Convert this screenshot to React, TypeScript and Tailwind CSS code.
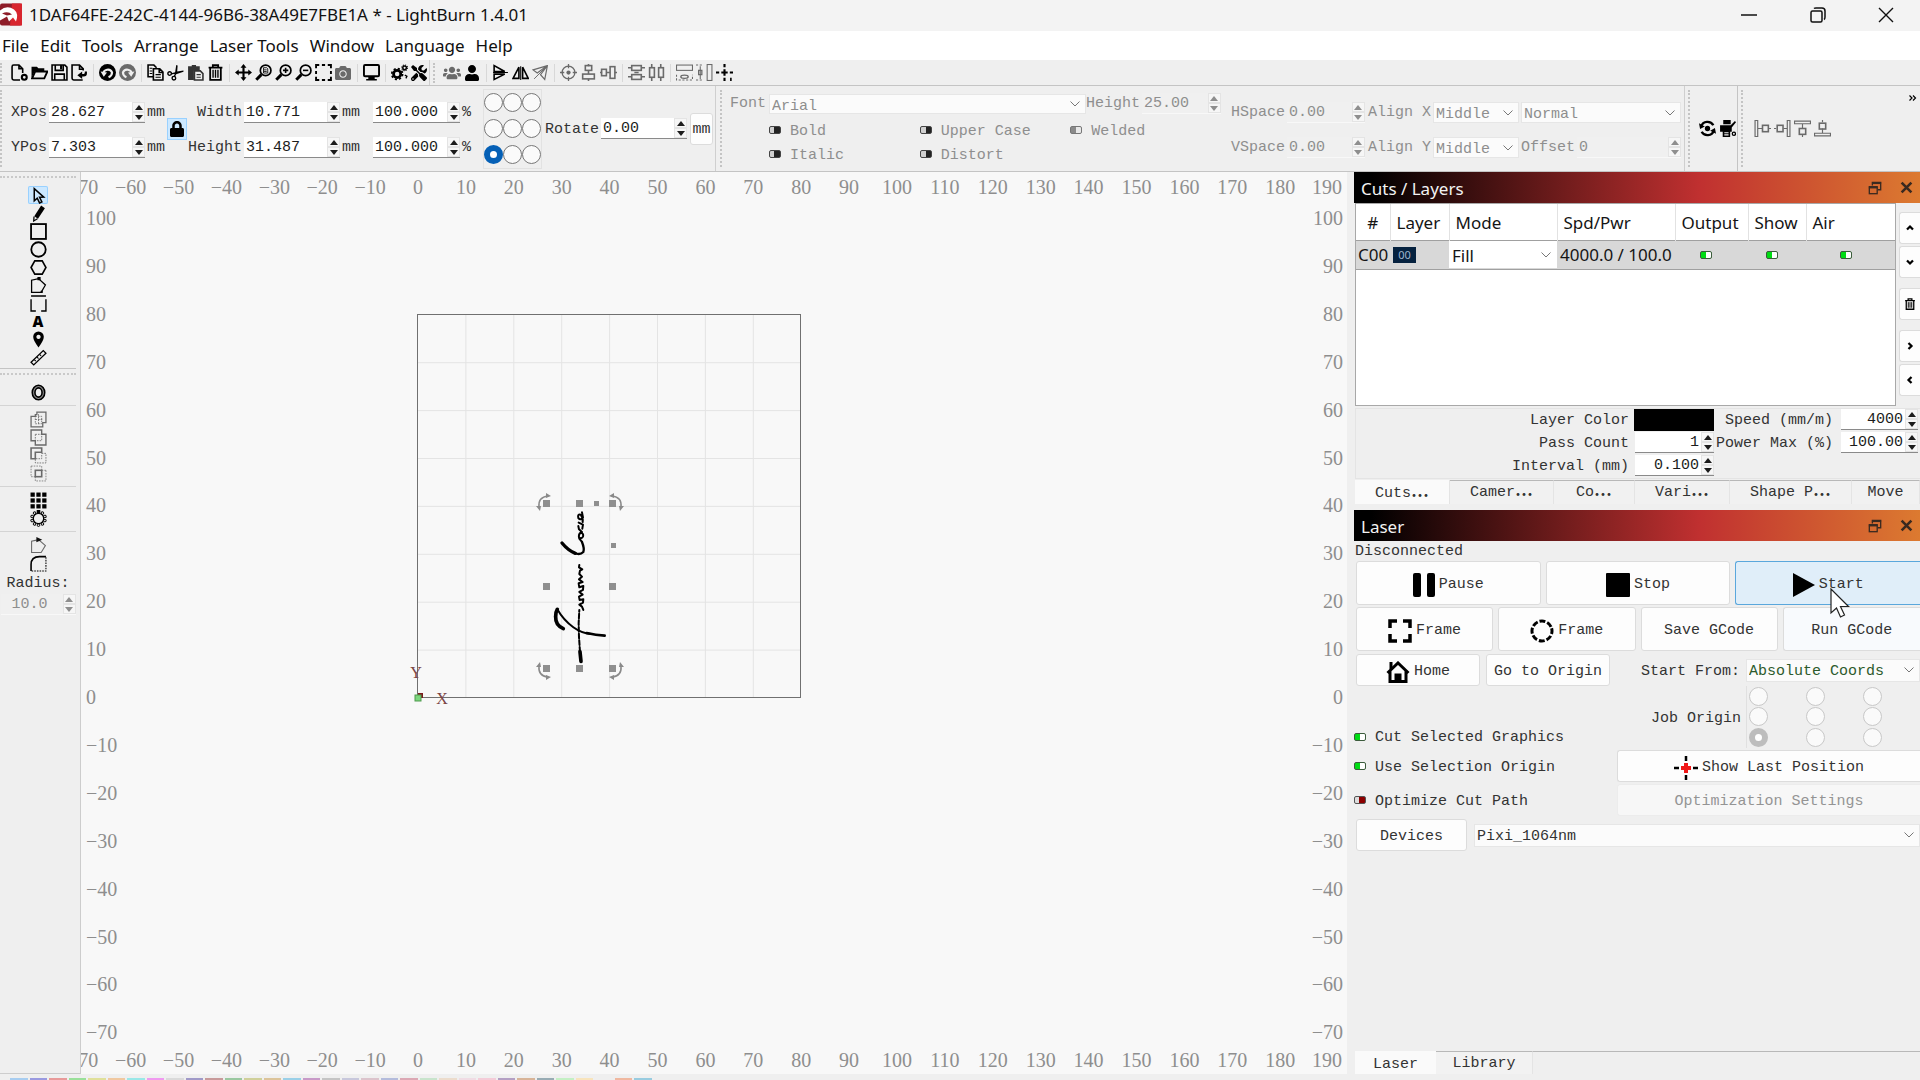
import type { ReactNode } from "react";
import clsx from "clsx";
import { FaCamera, FaLock, FaTools, FaUser, FaUsers } from "react-icons/fa";

const MONO = "font-['Liberation_Mono','Noto_Sans_CJK_SC',monospace]";
const SANS = "font-['Noto_Sans','Open_Sans',sans-serif]";

/* ---------- icons ---------- */

function Icon({ children, className = "size-[17px]" }: { children: ReactNode; className?: string }) {
  return (
    <svg
      viewBox="0 0 16 16"
      className={clsx("shrink-0", className)}
      fill="none"
      stroke="currentColor"
      strokeWidth="1.5"
      aria-hidden="true"
    >
      {children}
    </svg>
  );
}

const solid = { fill: "currentColor", stroke: "none" };

const NewIcon = () => (
  <Icon>
    <path d="M8.500 15H2.500Q1 15 1 13.500V2.500Q1 1 2.500 1H7.500L11 4.500V8.500M7.500 1V4.500H11" />
    <circle cx="12.500" cy="12.500" r="2.300" strokeWidth="2" />
  </Icon>
);
const OpenIcon = () => (
  <Icon>
    <path d="M1 13.500L4 7H15.500L12.500 13.500Z" strokeWidth="1.800" />
    <path d="M0.500 2.500h5L7 4h5.500v3H3.500L0.500 13z" {...solid} />
  </Icon>
);
const SaveIcon = () => (
  <Icon>
    <path d="M1 1H13L15 3V15H1Z" />
    <path d="M4 1V6H11.500V1M3.500 15V9.500H12.500V15" />
    <path d="M8.500 1h2v4h-2z" {...solid} />
  </Icon>
);
const ImportIcon = () => (
  <Icon>
    <path d="M11 15H2.500Q1 15 1 13.500V1H8L11.500 4.500V6M8 1V5H11.500" />
    <path d="M6 10.500L10.500 7V9.300H12Q13 9.300 13 8V7H15V9Q15 11.700 12 11.700H10.500V14Z" {...solid} />
  </Icon>
);
const UndoIcon = () => (
  <Icon>
    <circle cx="8" cy="8" r="8" {...solid} />
    <path d="M4 9.500A4.300 4.300 0 0 1 12.300 8Q12.300 11 9 12.500" stroke="#efefef" strokeWidth="2" />
    <path d="M1.500 7L7.500 8L4.500 12Z" fill="#efefef" stroke="none" />
  </Icon>
);
const RedoIcon = () => (
  <Icon>
    <circle cx="8" cy="8" r="8" {...solid} />
    <path d="M12 9.500A4.300 4.300 0 0 0 3.700 8Q3.700 11 7 12.500" stroke="#efefef" strokeWidth="2" />
    <path d="M14.500 7L8.500 8L11.500 12Z" fill="#efefef" stroke="none" />
  </Icon>
);
const CopyIcon = () => (
  <Icon>
    <path d="M6 12H1V1H6.500L9 3.500" />
    <path d="M6 4.500H12L15 7.500V15H6ZM11.500 4.500V8H15" />
    <path d="M2.500 4h2.500M2.500 6.500h2.500M2.500 9h2.500M8 10h5M8 12.500h5" strokeWidth="1" />
  </Icon>
);
const CutIcon = () => (
  <Icon>
    <circle cx="2.500" cy="9" r="1.700" strokeWidth="1.300" />
    <circle cx="6.500" cy="13.300" r="1.700" strokeWidth="1.300" />
    <path d="M4 9.300L8.500 8.300L7 11.500" strokeWidth="1.300" />
    <path d="M7.500 8.700L8.700 1L10 1.500L9.600 7L15.500 6.200V7.300L8.500 9.600Z" {...solid} />
  </Icon>
);
const PasteIcon = () => (
  <Icon className="size-[17px] text-[#333]">
    <path d="M1 2h3.500V1h4v1H12v4H6.500v9H1z" {...solid} />
    <path d="M7 6.500H12.500L15 9V15H7Z" />
    <path d="M9 10h4M9 12.500h4" strokeWidth="1" />
  </Icon>
);
const TrashIcon = ({ className = "size-[17px]" }: { className?: string }) => (
  <Icon className={className}>
    <path d="M1.500 3.500H14.500M5.500 3.500V1.200H10.500V3.500M3 3.500V15H13V3.500" strokeWidth="1.700" />
    <path d="M5.700 5.500V13M8 5.500V13M10.300 5.500V13" strokeWidth="1.300" />
  </Icon>
);
const MoveIcon = () => (
  <Icon>
    <path d="M8 2V14M2 8H14" strokeWidth="2" />
    <path d="M8 0l2.800 3.500H5.200zM8 16l2.800-3.500H5.200zM0 8l3.500-2.800v5.600zM16 8l-3.500-2.800v5.600z" {...solid} />
  </Icon>
);
function Magnifier({ mark }: { mark: ReactNode }) {
  return (
    <Icon>
      <circle cx="10" cy="6" r="5" strokeWidth="1.600" />
      <path d="M6 10L1.200 14.800" strokeWidth="2.800" />
      {mark}
    </Icon>
  );
}
const SelectFrameIcon = () => (
  <Icon>
    <path
      d="M1 4V1H4M6.500 1H9.500M12 1H15V4M15 6.500V9.500M15 12V15H12M9.500 15H6.500M4 15H1V12M1 9.500V6.500"
      strokeWidth="1.800"
    />
  </Icon>
);
const MonitorIcon = () => (
  <Icon>
    <rect x="0.900" y="1" width="14.200" height="10.500" rx="1" strokeWidth="1.800" />
    <path d="M5 12h6v2h2v1.500H3V14h2z" {...solid} />
  </Icon>
);
const GearsIcon = () => (
  <Icon>
    <circle cx="5.800" cy="9.500" r="3.400" strokeWidth="2.600" />
    <circle cx="5.800" cy="9.500" r="5.100" strokeWidth="1.600" strokeDasharray="2 2" />
    <circle cx="12.800" cy="3.600" r="1.700" strokeWidth="1.400" />
    <circle cx="12.800" cy="3.600" r="2.700" strokeWidth="1" strokeDasharray="1.060 1.060" />
    <path d="M13 10.500l2 1-1 2" strokeWidth="1.200" />
  </Icon>
);
const FlipVIcon = () => (
  <Icon>
    <path d="M2 1.500V7H12Z" />
    <path d="M1 8H15" strokeWidth="1" />
    <path d="M2 14.500V9.500H12Z" />
  </Icon>
);
const FlipHIcon = () => (
  <Icon>
    <path d="M1 13.500L6.500 3V13.500Z" />
    <path d="M8.200 2V15" strokeWidth="1" />
    <path d="M15.300 13.500L10 3V13.500Z" />
  </Icon>
);
const MirrorIcon = () => (
  <Icon>
    <path d="M1 5.500L14.500 1.500L5 8.500Z M14.500 1.500L8 10L12 14.500Z" strokeWidth="1.100" />
    <path d="M2 14L15 1" strokeWidth="0.900" />
  </Icon>
);
const TargetIcon = () => (
  <Icon>
    <circle cx="8" cy="8" r="6" strokeWidth="1.200" />
    <circle cx="8" cy="8" r="2" {...solid} />
    <path d="M8 0V4M8 12V16M0 8H4M12 8H16" strokeWidth="1.200" />
  </Icon>
);
const AlignCenterVIcon = () => (
  <Icon>
    <rect x="5" y="1.500" width="6" height="4.500" />
    <rect x="2.500" y="9.500" width="11" height="4.500" />
    <path d="M8 0V2M8 6V9.500M8 14V16" />
  </Icon>
);
const AlignCenterHIcon = () => (
  <Icon>
    <rect x="1.500" y="5" width="4.500" height="6" />
    <rect x="9.500" y="2.500" width="4.500" height="11" />
    <path d="M0 8H2M6 8H9.500M14 8H16" />
  </Icon>
);
const DistributeVIcon = () => (
  <Icon>
    <rect x="3.500" y="1.500" width="9" height="4.500" />
    <rect x="3.500" y="10" width="9" height="4.500" />
    <path d="M0 3.500H3M13 3.500H16M0 12H3M13 12H16M6 8H10" />
  </Icon>
);
const DistributeHIcon = () => (
  <Icon>
    <rect x="1.500" y="3.500" width="4.500" height="9" />
    <rect x="10" y="3.500" width="4.500" height="9" />
    <path d="M3.500 0V3M3.500 13V16M12 0V3M12 13V16" />
  </Icon>
);
const SpaceVIcon = () => (
  <Icon>
    <rect x="0.500" y="1" width="15" height="5" strokeWidth="1" />
    <path d="M0.500 10V15H15.500V10" strokeWidth="1" strokeDasharray="2 1.500" />
    <ellipse cx="8" cy="12" rx="3.500" ry="1.500" strokeWidth="1.200" />
  </Icon>
);
const SpaceHIcon = () => (
  <Icon>
    <rect x="10.500" y="0.500" width="4.500" height="15" strokeWidth="1" />
    <path d="M0 1H7M0 15H7" strokeWidth="1" strokeDasharray="2 1.500" />
    <path d="M4 2V14" strokeWidth="1" />
    <rect x="2.500" y="6" width="3" height="4" strokeWidth="1.200" />
  </Icon>
);
const CrossIcon = () => (
  <Icon>
    <path d="M8 0V3M8 5V11M8 13V16M0 8H3M5 8H11M13 8H16" strokeWidth="2" />
    <path d="M14 13v3" strokeWidth="1.500" />
  </Icon>
);

const ArrowToolIcon = () => (
  <Icon>
    <path d="M4 1.500V13L6.800 10.500L9 15L11.200 14L9 9.700L13 9.500Z" strokeWidth="1.400" />
  </Icon>
);
const PencilIcon = () => (
  <Icon>
    <path d="M10.500 0.500L14 3L7.500 13L4 10.500Z" {...solid} />
    <path d="M3.800 10.800L3.500 15L7 13" strokeWidth="1.200" />
  </Icon>
);
const CloseShapeIcon = () => (
  <Icon>
    <path d="M1.500 14.500V3L8 1.500L14.500 7.500L10.500 14.500Z" strokeWidth="1.200" />
    <path d="M7 0h3v3H7zM10 13h2v2h-2z" {...solid} />
  </Icon>
);
const RulerIcon = () => (
  <Icon>
    <path d="M1 12.500L12.500 1.500L15 4L3.500 15Z" strokeWidth="1.200" />
    <path d="M4 10l1.500 1.500M6.500 7.500L8 9M9 5l1.500 1.500" strokeWidth="1" />
  </Icon>
);

const DRAW_TOOLS: { name: string; icon: ReactNode }[] = [
  { name: "Select", icon: <ArrowToolIcon /> },
  { name: "Draw lines", icon: <PencilIcon /> },
  { name: "Rectangle", icon: <Icon><rect x="1" y="1" width="14" height="14" strokeWidth="1.700" /></Icon> },
  { name: "Ellipse", icon: <Icon><circle cx="8" cy="8" r="6.800" strokeWidth="1.700" /></Icon> },
  { name: "Polygon", icon: <Icon><path d="M1 8L4.500 1.800H11.500L15 8L11.500 14.200H4.500Z" /></Icon> },
  { name: "Edit nodes", icon: <CloseShapeIcon /> },
  { name: "Tabs", icon: <Icon><path d="M1 1H15M1 4V15H5.500M10.500 15H15V4" strokeWidth="1.300" /></Icon> },
  { name: "Text", icon: <span className="text-[15px] leading-none font-black font-['Noto_Sans',sans-serif]">A</span> },
  { name: "Position laser", icon: <Icon><path fillRule="evenodd" d="M8 0.500A5 5 0 0 1 13 5.500Q13 9 8 15.500Q3 9 3 5.500A5 5 0 0 1 8 0.500ZM8 3.500a2 2 0 1 0 0.010 0Z" {...solid} /></Icon> },
  { name: "Measure", icon: <RulerIcon /> },
];

const BOOLEAN_TOOLS: { name: string; icon: ReactNode }[] = [
  { name: "Weld", icon: <Icon><path d="M5 3.500H6.500V1H15V11H12V15H1V5H5Z" strokeWidth="1.200" /><path d="M5 5H11V12H5Z M8 3V12M5 8H12" strokeWidth="0.800" strokeDasharray="1.500 1" /></Icon> },
  { name: "Boolean union", icon: <Icon><path d="M1 1H11V5H15V15H5V11H1Z" strokeWidth="1.300" /><path d="M5 5H11V11H5Z" strokeWidth="0.800" strokeDasharray="1.500 1" /></Icon> },
  { name: "Boolean subtract", icon: <Icon><path d="M1 1H11V5H5V11H1Z" /><path d="M11 6H15V15H5V11H11Z" strokeWidth="0.800" strokeDasharray="1.500 1" /></Icon> },
  { name: "Boolean intersect", icon: <Icon><path d="M1 1H11V5M5 11H1V1M15 5V15H5V11M11 5H15" strokeWidth="0.700" strokeDasharray="1.500 1" /><rect x="5" y="5" width="6" height="6" /></Icon> },
];

const DotGridIcon = () => (
  <Icon>
    {[0.5, 6, 11.5].map((y) =>
      [0.5, 6, 11.5].map((x) => <rect key={`${x}-${y}`} x={x} y={y} width="4" height="4" {...solid} />)
    )}
  </Icon>
);
const CircularArrayIcon = () => (
  <Icon>
    <circle cx="8" cy="8" r="4.800" strokeWidth="1" />
    {[36, 72, 108, 144, 180, 216, 252, 288, 324].map((a) => (
      <circle key={a} cx="8" cy="1.700" r="1.200" strokeWidth="0.900" transform={`rotate(${a} 8 8)`} />
    ))}
    <rect x="6.300" y="0" width="3.400" height="3.400" {...solid} />
  </Icon>
);
const OffsetIcon = () => (
  <Icon>
    <ellipse cx="8" cy="8" rx="4.600" ry="5.600" strokeWidth="4" />
    <ellipse cx="8" cy="8" rx="4.600" ry="5.600" stroke="#8f8f8f" strokeWidth="1" />
  </Icon>
);
const StartPointIcon = () => (
  <Icon>
    <path d="M1.500 14.500V4L8 2.500L14.500 8L10.500 14.500Z" strokeWidth="1" />
    <path d="M6 0L11.500 2.500L6 5Z" fill="#111" stroke="none" />
  </Icon>
);
const RadiusIcon = () => (
  <Icon>
    <path d="M1 15V9Q1 1.500 9 1.500H15" />
    <path d="M15 2V15H1" strokeWidth="1" strokeDasharray="1.500 1" />
  </Icon>
);

/* ---------- controls ---------- */

function ToolButton({ name, children, dim, active }: { name: string; children: ReactNode; dim?: boolean; active?: boolean }) {
  return (
    <button
      type="button"
      aria-label={name}
      className={clsx(
        "flex h-[18px] w-5 shrink-0 items-center justify-center",
        dim ? "text-[#6a6a6a]" : "text-black",
        active && "rounded-xs bg-[#cce8ff] ring-1 ring-[#99d1ff] ring-inset"
      )}
    >
      {children}
    </button>
  );
}

const ToolGroup = ({ children }: { children: ReactNode }) => <div className="flex items-center">{children}</div>;
const Divider = () => (
  <div className="flex h-2 w-2 shrink-0 items-center justify-center">
    <span className="h-[18px] w-px bg-[#d8d8d8]" />
  </div>
);
const Grip = ({ className }: { className?: string }) => (
  <span className={clsx("my-1 w-px shrink-0 border-l-2 border-dotted border-[#c4c4c4]", className)} />
);

function Spin({ id, value, className, disabled, right }: { id: string; value: string; className?: string; disabled?: boolean; right?: boolean }) {
  return (
    <div
      className={clsx(
        "flex h-[21px] shrink-0 border-b",
        disabled ? "border-[#f8f8f8] bg-[#f0f0f0] text-[#8e8e8e]" : "border-[#8a8a8a] bg-white text-[#1c1c1c]",
        className
      )}
    >
      <input
        id={id}
        defaultValue={value}
        disabled={disabled}
        className={clsx("min-w-0 flex-1 bg-transparent px-0.5 pt-0.5 outline-none", right && "text-right")}
      />
      <div className="flex w-[13px] flex-col bg-[#f6f6f6]">
        <button type="button" disabled={disabled} aria-label={`Increase ${id}`} className="flex flex-1 items-center justify-center border border-[#e4e4e4]">
          <svg viewBox="0 0 8 5" className="h-[5px] w-2" fill="currentColor"><path d="M4 0L8 5H0Z" /></svg>
        </button>
        <button type="button" disabled={disabled} aria-label={`Decrease ${id}`} className="flex flex-1 items-center justify-center border border-[#e4e4e4]">
          <svg viewBox="0 0 8 5" className="h-[5px] w-2" fill="currentColor"><path d="M4 5L8 0H0Z" /></svg>
        </button>
      </div>
    </div>
  );
}

function Combo({ id, value, className, disabled, label }: { id: string; value: string; className?: string; disabled?: boolean; label?: string }) {
  return (
    <div className={clsx("flex items-center border border-[#e6e6e6] bg-[#fbfbfb]", disabled && "text-[#8e8e8e]", className)}>
      <select id={id} aria-label={label} disabled={disabled} className="h-full min-w-0 flex-1 appearance-none bg-transparent pt-0.5 pl-0.5 opacity-100 outline-none">
        <option>{value}</option>
      </select>
      <svg viewBox="0 0 10 6" className="mr-[5px] h-[6px] w-[10px] shrink-0 text-[#777]" fill="none" stroke="currentColor">
        <path d="M0.500 0.500L5 5L9.500 0.500" />
      </svg>
    </div>
  );
}

const SWITCH = {
  on: "border-[#3c5c3c] bg-[linear-gradient(90deg,#00dc14_50%,#fff_50%)]",
  off: "border-[#444] bg-[linear-gradient(90deg,#d0d0d0_45%,#222_45%)]",
  grey: "border-[#777] bg-[linear-gradient(90deg,#8a8a8a_55%,#e8e8e8_55%)]",
  red: "border-[#555] bg-[linear-gradient(90deg,#ddd_45%,#8c0000_45%)]",
};

function Switch({ kind, label, hideLabel, className }: { kind: keyof typeof SWITCH; label: string; hideLabel?: boolean; className?: string }) {
  return (
    <label className={clsx("flex items-center", className)}>
      <input
        type="checkbox"
        defaultChecked={kind === "on" || kind === "grey"}
        aria-label={label}
        className={clsx("h-2 w-3 shrink-0 appearance-none rounded-xs border", SWITCH[kind])}
      />
      {!hideLabel && <span className="ml-[9px] pt-[3px] whitespace-nowrap">{label}</span>}
    </label>
  );
}

function Anchors({ name, spread }: { name: string; spread?: boolean }) {
  return (
    <>
      {[0, 1, 2, 3, 4, 5, 6, 7, 8].map((i) => (
        <input
          key={i}
          type="radio"
          name={name}
          aria-label={`${name} ${i + 1}`}
          defaultChecked={i === 6}
          className={clsx(
            "size-[19px] appearance-none rounded-full border bg-[#fafafa] checked:border-[6px] checked:bg-white",
            spread ? "border-[#c8c8c8] checked:border-[#bdbdbd]" : "border-[#777] checked:border-[#0560b6]"
          )}
        />
      ))}
    </>
  );
}

function PushButton({ children, className, disabled }: { children: ReactNode; className?: string; disabled?: boolean }) {
  return (
    <button
      type="button"
      disabled={disabled}
      className={clsx(
        "flex items-center justify-center gap-1 rounded-[3px] border pt-[3px] whitespace-nowrap",
        disabled ? "border-[#ececec] bg-[#f7f7f7] text-[#949494]" : "border-[#dcdcdc] bg-[#fdfdfd]",
        className
      )}
    >
      {children}
    </button>
  );
}

function DockTitle({ title }: { title: string }) {
  return (
    <div className={clsx("flex h-[31px] shrink-0 items-center bg-[linear-gradient(90deg,#000_3%,#c03030_61%,#dc7a30)] px-[7px] text-[17px] text-[#f2f2f2]", SANS)}>
      <h2 className="flex-1 pt-0.5">{title}</h2>
      <button type="button" aria-label={`Float ${title}`} className="mr-[18px] text-[#3a2a20]">
        <Icon className="size-[14px]"><path d="M5 5V1.500H14.500V10H11" /><path d="M4.500 2.500H15" strokeWidth="2" /><rect x="1.500" y="6.500" width="9" height="8" /><path d="M1 7.500H11" strokeWidth="2" /></Icon>
      </button>
      <button type="button" aria-label={`Close ${title}`} className="text-[#3a2a20]">
        <Icon className="size-[13px]"><path d="M2 2L14 14M14 2L2 14" strokeWidth="3.200" /></Icon>
      </button>
    </div>
  );
}

/* ---------- page parts ---------- */

function TitleBar() {
  return (
    <header className={clsx("flex h-[31px] shrink-0 items-center bg-[#f3f3f3] pb-0.5 text-[#111]", SANS)}>
      <svg viewBox="0 0 22 22" className="h-[23px] w-[22px] shrink-0">
        <rect width="22" height="22" rx="2" fill="#8e1c28" />
        <path d="M12 0H22V22H10Z" fill="#d8252e" />
        <path d="M0 7Q7 1 14 6Q19 10 16 18L13 14L9 18L7 13L0 17Z" fill="#fff" />
        <path d="M2 10Q8 7 12 11L7 12Z" fill="#8e1c28" />
      </svg>
      <h1 className="ml-[7px] flex-1 text-[17px] whitespace-nowrap">1DAF64FE-242C-4144-96B6-38A49E7FBE1A * - LightBurn 1.4.01</h1>
      <button type="button" aria-label="Minimize" className="flex w-[70px] justify-center">
        <Icon className="size-4"><path d="M0 8H16" /></Icon>
      </button>
      <button type="button" aria-label="Restore" className="flex w-[68px] justify-center">
        <Icon className="size-4"><rect x="1" y="4" width="11" height="11" rx="1.500" /><path d="M4 1.500Q4.500 1 6 1H12Q15 1 15 4V10Q15 12 14 12.500" /></Icon>
      </button>
      <button type="button" aria-label="Close" className="flex w-[68px] justify-center">
        <Icon className="size-4"><path d="M1 1L15 15M15 1L1 15" strokeWidth="1.400" /></Icon>
      </button>
    </header>
  );
}

const MENUS = ["File", "Edit", "Tools", "Arrange", "Laser Tools", "Window", "Language", "Help"];

function MenuBar() {
  return (
    <nav className={clsx("flex h-[29px] shrink-0 items-center gap-[11px] bg-white pl-0.5 text-[17px] text-[#111]", SANS)}>
      {MENUS.map((m) => (
        <button key={m} type="button" className="whitespace-nowrap">{m}</button>
      ))}
    </nav>
  );
}

function ToolBar() {
  return (
    <div className="flex h-[25px] shrink-0 items-center">
      <Grip className="mr-[7px] h-5" />
      <ToolGroup>
        <ToolButton name="New"><NewIcon /></ToolButton>
        <ToolButton name="Open"><OpenIcon /></ToolButton>
        <ToolButton name="Save"><SaveIcon /></ToolButton>
        <ToolButton name="Import"><ImportIcon /></ToolButton>
        <Divider />
        <ToolButton name="Undo"><UndoIcon /></ToolButton>
        <ToolButton name="Redo" dim><RedoIcon /></ToolButton>
        <Divider />
        <ToolButton name="Copy"><CopyIcon /></ToolButton>
        <ToolButton name="Cut"><CutIcon /></ToolButton>
        <ToolButton name="Paste"><PasteIcon /></ToolButton>
        <ToolButton name="Delete"><TrashIcon /></ToolButton>
        <Divider />
        <ToolButton name="Pan"><MoveIcon /></ToolButton>
        <ToolButton name="Zoom to page"><Magnifier mark={<path d="M8 3.500H11L12 4.500V8.500H8ZM8.500 5.500H11M8.500 7H11" strokeWidth="0.800" />} /></ToolButton>
        <ToolButton name="Zoom in"><Magnifier mark={<path d="M10 3.500V8.500M7.500 6H12.500" />} /></ToolButton>
        <ToolButton name="Zoom out"><Magnifier mark={<path d="M7.500 6H12.500" />} /></ToolButton>
        <ToolButton name="Frame selection"><SelectFrameIcon /></ToolButton>
        <ToolButton name="Camera" dim><FaCamera size={16} /></ToolButton>
        <Divider />
        <ToolButton name="Preview"><MonitorIcon /></ToolButton>
        <Divider />
        <ToolButton name="Settings"><GearsIcon /></ToolButton>
        <ToolButton name="Device settings"><FaTools size={16} /></ToolButton>
      </ToolGroup>
      <span className="h-full w-px bg-[#cfcfcf]" />
      <Grip className="mr-[7px] ml-[3px] h-5" />
      <ToolGroup>
        <ToolButton name="Group" dim><FaUsers size={18} /></ToolButton>
        <ToolButton name="Ungroup"><FaUser size={16} /></ToolButton>
        <Divider />
        <ToolButton name="Flip vertical"><FlipVIcon /></ToolButton>
        <ToolButton name="Flip horizontal"><FlipHIcon /></ToolButton>
        <ToolButton name="Mirror across line" dim><MirrorIcon /></ToolButton>
        <Divider />
        <ToolButton name="Align centers" dim><TargetIcon /></ToolButton>
        <ToolButton name="Align vertical centers" dim><AlignCenterVIcon /></ToolButton>
        <ToolButton name="Align horizontal centers" dim><AlignCenterHIcon /></ToolButton>
        <Divider />
        <ToolButton name="Distribute vertically" dim><DistributeVIcon /></ToolButton>
        <ToolButton name="Distribute horizontally" dim><DistributeHIcon /></ToolButton>
        <Divider />
        <ToolButton name="Space vertically" dim><SpaceVIcon /></ToolButton>
        <ToolButton name="Space horizontally" dim><SpaceHIcon /></ToolButton>
        <ToolButton name="Move to page center"><CrossIcon /></ToolButton>
      </ToolGroup>
    </div>
  );
}

function PropertiesBar() {
  return (
    <div className="flex h-[87px] shrink-0 border-y border-[#c4c4c4] text-[#333]">
      <div className="flex items-center border-r border-[#cfcfcf] pr-[2px]">
        <Grip className="mr-[9px] self-stretch" />
        <div className="flex flex-col gap-[14px] pt-[3px]">
          <div className="flex items-center gap-0.5">
            <label htmlFor="xpos" className="w-9">XPos</label>
            <Spin id="xpos" value="28.627" className="w-24" />
            <span>mm</span>
          </div>
          <div className="flex items-center gap-0.5">
            <label htmlFor="ypos" className="w-9">YPos</label>
            <Spin id="ypos" value="7.303" className="w-24" />
            <span>mm</span>
          </div>
        </div>
        <button type="button" aria-label="Lock aspect ratio" className="ml-0.5 flex h-[22px] w-5 items-center justify-center border border-[#99d1ff] bg-[#cce8ff] text-black">
          <FaLock size={16} />
        </button>
        <div className="flex flex-col gap-[14px] pt-[3px]">
          <div className="flex items-center gap-0.5">
            <label htmlFor="width" className="w-[55px] text-right">Width</label>
            <Spin id="width" value="10.771" className="w-24" />
            <span>mm</span>
            <Spin id="scale-x" value="100.000" className="ml-[11px] w-[87px]" />
            <label htmlFor="scale-x">%</label>
          </div>
          <div className="flex items-center gap-0.5">
            <label htmlFor="height" className="w-[55px] text-right">Height</label>
            <Spin id="height" value="31.487" className="w-24" />
            <span>mm</span>
            <Spin id="scale-y" value="100.000" className="ml-[11px] w-[87px]" />
            <label htmlFor="scale-y">%</label>
          </div>
        </div>
        <div className="mr-[3px] ml-[12px] grid h-[80px] grid-cols-3 place-items-center border border-[#e2e2e2]">
          <Anchors name="anchor" />
        </div>
        <label htmlFor="rotate" className="mr-0.5 pt-0.5">Rotate</label>
        <Spin id="rotate" value="0.00" className="w-[86px]" />
        <PushButton className="ml-[3px] h-8 w-[23px]">mm</PushButton>
      </div>

      <div className="flex min-w-0 flex-1 border-r border-[#cfcfcf] text-[#8e8e8e]">
        <Grip className="mr-2 ml-[4px]" />
        <div className="flex min-w-0 flex-1 flex-col pt-[7px]">
          <div className="flex items-center">
            <label htmlFor="font" className="mr-[3px]">Font</label>
            <Combo id="font" value="Arial" disabled className="h-5 min-w-0 flex-1" />
            <label htmlFor="text-height" className="mr-0.5">Height</label>
            <Spin id="text-height" value="25.00" disabled className="w-[79px]" />
          </div>
          <div className="mt-1 grid grid-cols-3 pl-[39px] leading-[21px]">
            <Switch kind="off" label="Bold" />
            <Switch kind="off" label="Upper Case" />
            <Switch kind="grey" label="Welded" />
            <Switch kind="off" label="Italic" />
            <Switch kind="off" label="Distort" />
          </div>
        </div>
        <div className="ml-[10px] flex flex-col justify-center gap-[14px] pt-[3px]">
          <div className="flex items-center gap-0.5">
            <label htmlFor="hspace">HSpace</label>
            <Spin id="hspace" value="0.00" disabled className="w-[78px]" />
          </div>
          <div className="flex items-center gap-0.5">
            <label htmlFor="vspace">VSpace</label>
            <Spin id="vspace" value="0.00" disabled className="w-[78px]" />
          </div>
        </div>
        <div className="mr-[3px] ml-[3px] flex flex-col justify-center gap-[14px] pt-[3px]">
          <div className="flex items-center gap-0.5">
            <label htmlFor="align-x">Align X</label>
            <Combo id="align-x" value="Middle" disabled className="h-[21px] w-[86px]" />
            <Combo id="text-mode" label="Text mode" value="Normal" disabled className="h-[21px] w-[160px]" />
          </div>
          <div className="flex items-center gap-0.5">
            <label htmlFor="align-y">Align Y</label>
            <Combo id="align-y" value="Middle" disabled className="h-[21px] w-[86px]" />
            <label htmlFor="offset">Offset</label>
            <Spin id="offset" value="0" disabled className="w-[104px]" />
          </div>
        </div>
      </div>

      <div className="flex items-center border-r border-[#c4c4c4]">
        <Grip className="mr-[7px] ml-[3px] self-stretch" />
        <ToolButton name="Rotary">
          <Icon>
            <path d="M2 6A6.300 6.300 0 0 1 13.500 5M14 10A6.300 6.300 0 0 1 2.500 11" strokeWidth="2.200" />
            <circle cx="8" cy="8" r="2.500" {...solid} />
            <path d="M0 3L1 8.500L5.500 6ZM16 13L15 7.500L10.500 10Z" {...solid} />
          </Icon>
        </ToolButton>
        <ToolButton name="Print and cut">
          <Icon>
            <path d="M4 0h7v4H4zM1 5h10l4-4 1 1-4 5v4H1zM3.500 10h7v6h-7z" {...solid} />
            <path d="M5 12h4M5 14h4" stroke="#efefef" strokeWidth="1" />
            <circle cx="14" cy="13" r="1.500" strokeWidth="1.200" />
          </Icon>
        </ToolButton>
      </div>
      <div className="flex w-[182px] items-center">
        <Grip className="mr-[9px] ml-[3px] self-stretch" />
        <ToolButton name="Align left" dim><Icon><path d="M1 0.500H3.500V15.500H1ZM4 8H8M14 8H16" strokeWidth="1.100" /><rect x="8" y="5" width="5.500" height="6" /></Icon></ToolButton>
        <ToolButton name="Align right" dim><Icon><path d="M12.500 0.500H15V15.500H12.500ZM12 8H9M0 8H2" strokeWidth="1.100" /><rect x="3" y="5" width="5.500" height="6" /></Icon></ToolButton>
        <ToolButton name="Align top" dim><Icon><path d="M0.500 1H15.500V3.500H0.500ZM8 4V8M8 14V16" strokeWidth="1.100" /><rect x="5" y="8" width="6" height="5.500" /></Icon></ToolButton>
        <ToolButton name="Align bottom" dim><Icon><path d="M0.500 12.500H15.500V15H0.500ZM8 12V8M8 0V2" strokeWidth="1.100" /><rect x="5" y="3" width="6" height="5.500" /></Icon></ToolButton>
        <button type="button" aria-label="More tools" className="mt-2 mr-[3px] ml-auto self-start text-black">
          <Icon className="size-2"><path d="M1 3L6 8L1 13M8 3L13 8L8 13" strokeWidth="2.400" /></Icon>
        </button>
      </div>
    </div>
  );
}

const Rule = () => <span className="my-1 h-px w-[76px] shrink-0 bg-[#d4d4d4]" />;
const HGrip = () => <span className="mt-1 mb-2 h-0.5 w-full shrink-0 border-t-2 border-dotted border-[#c9c9c9]" />;

function SideTools() {
  return (
    <aside className="flex w-[81px] shrink-0 flex-col items-center border-r border-b border-[#cdcdcd] pr-1">
      <HGrip />
      {DRAW_TOOLS.map((t, i) => (
        <ToolButton key={t.name} name={t.name} active={i === 0}>{t.icon}</ToolButton>
      ))}
      <span className="mt-0.5 h-px w-full shrink-0 bg-[#c4c4c4]" />
      <HGrip />
      <ToolButton name="Offset shapes"><OffsetIcon /></ToolButton>
      <Rule />
      {BOOLEAN_TOOLS.map((t) => (
        <ToolButton key={t.name} name={t.name} dim>{t.icon}</ToolButton>
      ))}
      <Rule />
      <ToolButton name="Grid array"><DotGridIcon /></ToolButton>
      <ToolButton name="Circular array"><CircularArrayIcon /></ToolButton>
      <Rule />
      <ToolButton name="Set start point" dim><StartPointIcon /></ToolButton>
      <ToolButton name="Round corners"><RadiusIcon /></ToolButton>
      <label htmlFor="radius" className="pt-0.5 leading-5 text-[#333]">Radius:</label>
      <Spin id="radius" value=" 10.0" disabled className="w-[75px]" />
    </aside>
  );
}

const ORIGIN_X = 418;
const ORIGIN_Y = 698;
const STEP = 47.9;
const range = (from: number, to: number) => Array.from({ length: to - from + 1 }, (_, i) => from + i);
const tick = (n: number) => (n < 0 ? `−${-n * 10}` : `${n * 10}`);

const HANDLES = [
  [547, 504], [580, 504], [613, 504], [547, 587], [613, 587], [547, 669], [580, 669], [613, 669],
];

function Workspace() {
  return (
    <main className="min-w-0 flex-1 bg-[#f8f8f8]">
      <svg width="100%" height="100%" className="block overflow-hidden" role="img" aria-label="Workspace">
        <g transform="translate(-81 -172)">
          <g fill="#8e8e8e" fontSize="20" fontFamily="'Liberation Serif', serif">
            {range(-7, 19).map((n) => (
              <g key={n} textAnchor="middle">
                <text x={n === 19 ? 1327 : ORIGIN_X + n * STEP} y="194">{tick(n)}</text>
                <text x={n === 19 ? 1327 : ORIGIN_X + n * STEP} y="1067">{tick(n)}</text>
              </g>
            ))}
            {range(-7, 10).map((n) => (
              <g key={n}>
                <text x="86" y={ORIGIN_Y - n * STEP + 6}>{tick(n)}</text>
                <text x="1343" y={ORIGIN_Y - n * STEP + 6} textAnchor="end">{tick(n)}</text>
              </g>
            ))}
          </g>

          <g stroke="#e4e4e4">
            {range(1, 7).map((n) => (
              <g key={n}>
                <line x1={ORIGIN_X + n * STEP} x2={ORIGIN_X + n * STEP} y1="315" y2="698" />
                <line x1="418" x2="801" y1={ORIGIN_Y - n * STEP} y2={ORIGIN_Y - n * STEP} />
              </g>
            ))}
          </g>
          <rect x="417.500" y="314.500" width="383" height="383" fill="none" stroke="#707070" />

          <g fill="#7a4545" fontSize="16" fontFamily="'Liberation Serif', serif" textAnchor="middle">
            <text x="416" y="678">Y</text>
            <text x="442" y="704">X</text>
          </g>
          <rect x="418" y="693" width="5" height="5" fill="#7a1c1c" />
          <rect x="415" y="695" width="6" height="6" fill="#7cd67c" stroke="#4f9a4f" />

          {/* script lettering, drawn bottom to top */}
          <g transform="translate(400 480) scale(0.3333)" fill="none" stroke="#000" strokeLinecap="round" strokeLinejoin="round">
            <path d="M490 446Q466 436 467 410Q467 396 472 388" strokeWidth="11" />
            <path d="M472 388Q490 420 520 442Q545 460 572 462" strokeWidth="6" />
            <path d="M560 459Q588 466 614 467" strokeWidth="8" />
            <path d="M543 544L540 515" strokeWidth="11" />
            <path d="M540 515L537 470L536 430L538 390" strokeWidth="6" strokeDasharray="14 6" />
            <path
              d="M550 390L546 380L538 374L549 368L550 358L539 360L537 350L548 344L538 336L549 330L550 318L538 322L536 310L548 306L537 298L546 290L538 282L540 272L547 268L537 262L538 255"
              strokeWidth="6"
            />
            <path d="M486 189Q505 212 526 220" strokeWidth="10" />
            <path d="M524 219Q540 226 550 216Q554 206 546 186" strokeWidth="7" />
            <path
              d="M546 186L538 176Q534 164 542 158Q552 160 549 170Q546 176 540 174M546 156L537 148L535 138M547 146L549 134L536 128M548 126Q550 114 542 104Q532 102 535 114Q542 122 549 112L546 97"
              strokeWidth="6"
            />
          </g>

          <g fill="#8f8f8f">
            {HANDLES.map(([x, y]) => (
              <rect key={`${x}-${y}`} x={x - 4} y={y - 4} width="7" height="7" />
            ))}
            <rect x="594" y="501" width="5" height="5" />
            <rect x="611" y="543" width="5" height="5" />
          </g>
          {[
            "translate(547 504)",
            "translate(613 504) scale(-1 1)",
            "translate(547 669) scale(1 -1)",
            "translate(613 669) scale(-1 -1)",
          ].map((t) => (
            <g key={t} transform={t}>
              <path d="M-8 3Q-9 -7 1 -8" fill="none" stroke="#8a8a8a" strokeWidth="1.500" />
              <path d="M-11 2L-7 7L-6 2ZM-1 -11L4 -8L-1 -6Z" fill="#8a8a8a" />
            </g>
          ))}
        </g>
      </svg>
    </main>
  );
}

function LayerTable() {
  const head = "border-r border-[#e2e2e2] px-[6px] pt-0.5 text-left font-normal";
  return (
    <div className="flex pl-px">
      <div className="h-[203px] min-w-0 flex-1 border border-[#a8a8a8] bg-white">
        <table className={clsx("w-full table-fixed border-collapse text-[17px] text-[#151515]", SANS)}>
          <colgroup>
            <col className="w-[34px]" />
            <col className="w-[59px]" />
            <col className="w-[108px]" />
            <col className="w-[118px]" />
            <col className="w-[73px]" />
            <col className="w-[58px]" />
            <col />
          </colgroup>
          <thead>
            <tr className="h-[36px]">
              <th className="border-r border-[#e2e2e2] pt-0.5 text-center font-normal">#</th>
              <th className={head}>Layer</th>
              <th className={head}>Mode</th>
              <th className={head}>Spd/Pwr</th>
              <th className={head}>Output</th>
              <th className={head}>Show</th>
              <th className="px-[6px] pt-0.5 text-left font-normal">Air</th>
            </tr>
          </thead>
          <tbody>
            <tr className="h-[29px] border-y border-[#a0a0a0] bg-[#d8d8d8]">
              <td className="pl-0.5 whitespace-nowrap">C00</td>
              <td className="pl-[3px]">
                <span className="flex h-4 w-[23px] items-center justify-center bg-[#06223f] text-[11px] text-[#9db4cc]">00</span>
              </td>
              <td className="p-0">
                <Combo id="mode" label="Mode" value="Fill" className="h-[27px] w-full border-white bg-white" />
              </td>
              <td className="pl-[3px] whitespace-nowrap">4000.0 / 100.0</td>
              <td><Switch kind="on" label="Output" hideLabel className="ml-[25px]" /></td>
              <td><Switch kind="on" label="Show" hideLabel className="ml-[18px]" /></td>
              <td><Switch kind="on" label="Air" hideLabel className="ml-[34px]" /></td>
            </tr>
          </tbody>
        </table>
      </div>
      <div className="ml-[3px] flex w-[21px] flex-col gap-0.5 pt-[9px]">
        {[
          { name: "Move layer up", d: "M4 10L8 6L12 10", gap: "" },
          { name: "Move layer down", d: "M4 6L8 10L12 6", gap: "" },
          { name: "Delete layer", d: "", gap: "my-2" },
          { name: "Next settings", d: "M6 4L10 8L6 12", gap: "" },
          { name: "Previous settings", d: "M10 4L6 8L10 12", gap: "" },
        ].map((b) => (
          <button
            key={b.name}
            type="button"
            aria-label={b.name}
            className={clsx("flex h-8 items-center justify-center rounded-l-[3px] border border-r-0 border-[#dcdcdc] bg-[#fdfdfd] text-black", b.gap)}
          >
            {b.d ? <Icon className="size-3"><path d={b.d} strokeWidth="3" /></Icon> : <TrashIcon className="size-[12px]" />}
          </button>
        ))}
      </div>
    </div>
  );
}

const DOCK_TABS = [
  { text: "Cuts", cut: true, w: "w-[95px]" },
  { text: "Camer", cut: true, w: "w-[104px]" },
  { text: "Co", cut: true, w: "w-[81px]" },
  { text: "Vari", cut: true, w: "w-[95px]" },
  { text: "Shape P", cut: true, w: "w-[122px]" },
  { text: "Move", cut: false, w: "flex-1" },
];

function CutsPanel() {
  return (
    <section>
      <DockTitle title="Cuts / Layers" />
      <LayerTable />
      <div className="mt-0.5 ml-px grid grid-cols-[1fr_80px_119px_85px] gap-y-px border border-r-0 border-[#e4e4e4] pr-0.5 pb-px text-right leading-5 text-[#333]">
        <span className="pt-0.5 pr-[5px]">Layer Color</span>
        <button type="button" aria-label="Layer Color" className="h-[22px] bg-black" />
        <label htmlFor="speed" className="pt-0.5">Speed (mm/m)</label>
        <Spin id="speed" value="4000" right className="ml-2" />
        <label htmlFor="passes" className="pt-0.5 pr-[5px]">Pass Count</label>
        <Spin id="passes" value="1" right className="ml-px" />
        <label htmlFor="power" className="pt-0.5">Power Max (%)</label>
        <Spin id="power" value="100.00" right className="ml-2" />
        <label htmlFor="interval" className="pt-0.5 pr-[5px]">Interval (mm)</label>
        <Spin id="interval" value="0.100" right className="ml-px" />
      </div>
      <div className="mt-px ml-px flex h-6 text-[#333]">
        {DOCK_TABS.map((t, i) => (
          <button
            key={t.text}
            type="button"
            className={clsx(
              "flex items-center justify-center border-r border-[#e4e4e4] whitespace-nowrap",
              t.w,
              i === 0 ? "bg-[#fafafa] pt-1" : "border-t border-t-[#b8b8b8] bg-[#f1f1f1]"
            )}
          >
            {t.text}
            {t.cut && <span className="font-['Noto_Sans_CJK_SC',sans-serif] text-[18px] leading-none font-bold">⋯</span>}
          </button>
        ))}
      </div>
    </section>
  );
}

function LaserPanel() {
  return (
    <section className="mt-[6px] flex flex-1 flex-col text-[#333]">
      <DockTitle title="Laser" />
      <p className="pt-0.5 pl-px leading-[18px]">Disconnected</p>
      <div className="ml-0.5 grid grid-cols-3 gap-[5px]">
        <PushButton className="h-11">
          <svg viewBox="0 0 22 24" className="h-6 w-[22px]"><rect width="8" height="24" rx="2" /><rect x="14" width="8" height="24" rx="2" /></svg>
          Pause
        </PushButton>
        <PushButton className="h-11">
          <svg viewBox="0 0 24 24" className="size-6"><rect width="24" height="24" rx="1" /></svg>
          Stop
        </PushButton>
        <PushButton className="relative h-11 rounded-r-none border-r-0 border-[#5aa7dc]! bg-[#e0eef9]!">
          <svg viewBox="0 0 22 24" className="h-6 w-[22px]"><path d="M0 0L22 12L0 24Z" /></svg>
          Start
          <svg viewBox="0 0 20 30" className="absolute top-[26px] left-[94px] h-[30px] w-5" fill="#fff" stroke="#222" strokeWidth="1.200">
            <path d="M1 1V25L6.500 20L10.500 29L14.500 27L10.500 18.500H18.500Z" />
          </svg>
        </PushButton>
      </div>
      <div className="mt-0.5 ml-0.5 grid grid-cols-4 gap-[5px]">
        <PushButton className="h-11">
          <svg viewBox="0 0 24 24" className="size-6" fill="none" stroke="#000" strokeWidth="3.500"><path d="M2 9V2H9M15 2H22V9M22 15V22H15M9 22H2V15" /></svg>
          Frame
        </PushButton>
        <PushButton className="h-11">
          <svg viewBox="0 0 24 24" className="size-6" fill="none" stroke="#000" strokeWidth="3"><circle cx="12" cy="12" r="10" strokeDasharray="5.850 2" transform="rotate(-16 12 12)" /></svg>
          Frame
        </PushButton>
        <PushButton className="h-11">Save GCode</PushButton>
        <PushButton className="h-11 rounded-r-none border-r-0 bg-[#f8fafd]!">Run GCode</PushButton>
      </div>
      <div className="mt-[3px] ml-0.5 flex items-center">
        <PushButton className="h-8 w-[124px]">
          <svg viewBox="0 0 24 22" className="h-[22px] w-6" fill="none" stroke="#000" strokeWidth="3">
            <path d="M1.500 12L12 2L22.500 12M4 10V20.500H20V10" />
            <path d="M10 21V14H14V21" fill="#000" />
            <path d="M5 1V8" />
          </svg>
          Home
        </PushButton>
        <PushButton className="ml-[6px] h-8 w-[124px]">Go to Origin</PushButton>
        <label htmlFor="start-from" className="mr-[6px] ml-auto pt-[3px]">Start From:</label>
        <Combo id="start-from" value="Absolute Coords" className="h-[23px] w-[174px] text-[#2c5a2c]" />
      </div>
      <div className="grid grid-cols-[263px_1fr] gap-y-0.5">
        <Switch kind="on" label="Cut Selected Graphics" className="self-end" />
        <div className="flex items-center justify-end gap-[5px]">
          <span className="pt-[3px]">Job Origin</span>
          <div className="grid h-[62px] w-[174px] grid-cols-3 items-center border-l border-[#e0e0e0] pl-0.5">
            <Anchors name="origin" spread />
          </div>
        </div>
        <Switch kind="on" label="Use Selection Origin" />
        <PushButton className="h-8 rounded-r-none border-r-0">
          <svg viewBox="0 0 24 24" className="size-6" fill="none" strokeWidth="2.500">
            <path d="M12 0V5M12 19V24M0 12H5M19 12H24" stroke="#000" />
            <path d="M12 7V17M7 12H17" stroke="#f01818" strokeWidth="4" />
          </svg>
          Show Last Position
        </PushButton>
        <Switch kind="red" label="Optimize Cut Path" />
        <PushButton disabled className="h-8 rounded-r-none border-r-0">Optimization Settings</PushButton>
      </div>
      <div className="mt-[3px] ml-0.5 flex items-center gap-[7px]">
        <PushButton className="h-8 w-[111px]">Devices</PushButton>
        <Combo id="device" label="Device" value="Pixi_1064nm" className="h-[23px] flex-1" />
      </div>
      <div className="mt-auto ml-px flex h-[23px]">
        <button type="button" className="w-[81px] bg-[#fafafa] pt-1">Laser</button>
        <button type="button" className="w-[97px] border-t border-r border-[#e4e4e4] border-t-[#b8b8b8] bg-[#f2f2f2] pt-0.5">Library</button>
        <span className="flex-1 border-t border-[#b8b8b8]" />
      </div>
    </section>
  );
}

const PALETTE = [
  "bg-[#a8cdf0]", "bg-[#9a9ae0]", "bg-[#e89a9a]", "bg-[#9ae09a]", "bg-[#e0e09a]", "bg-[#f0c8a0]", "bg-[#9ae8e8]", "bg-[#f09af0]",
  "bg-[#dadada]", "bg-[#a09ac8]", "bg-[#c89a9a]", "bg-[#9ac8a0]", "bg-[#d0d09a]", "bg-[#dcc49a]", "bg-[#9ad0e8]", "bg-[#c89ac8]",
  "bg-[#c4c4c4]", "bg-[#c8c8dc]", "bg-[#dcc4cc]", "bg-[#b4bcdc]", "bg-[#dca8b4]", "bg-[#c8e4cc]", "bg-[#ecdccc]", "bg-[#f0dce4]",
  "bg-[#f4ccd8]", "bg-[#b4a0c4]", "bg-[#d8b498]", "bg-[#98acb4]", "bg-[#c4f0c4]", "bg-[#f8e4bc]", "bg-[#efefef]", "bg-[#f0b8a0]", "bg-[#98cce0]",
];

export default function App() {
  return (
    <div className={clsx("flex h-screen flex-col overflow-hidden bg-[#efefef] text-[15px] leading-5", MONO)}>
      <TitleBar />
      <MenuBar />
      <ToolBar />
      <PropertiesBar />
      <div className="flex min-h-0 flex-1">
        <SideTools />
        <Workspace />
        <div className="ml-[7px] flex w-[566px] shrink-0 flex-col">
          <CutsPanel />
          <LaserPanel />
        </div>
      </div>
      <footer className="mt-1 flex h-0.5 shrink-0 pl-[10px]">
        {PALETTE.map((c, i) => (
          <span key={c} className={clsx(i % 2 ? "w-[17px] mr-0.5" : "w-[18px] mr-0.5", c)} />
        ))}
      </footer>
    </div>
  );
}
